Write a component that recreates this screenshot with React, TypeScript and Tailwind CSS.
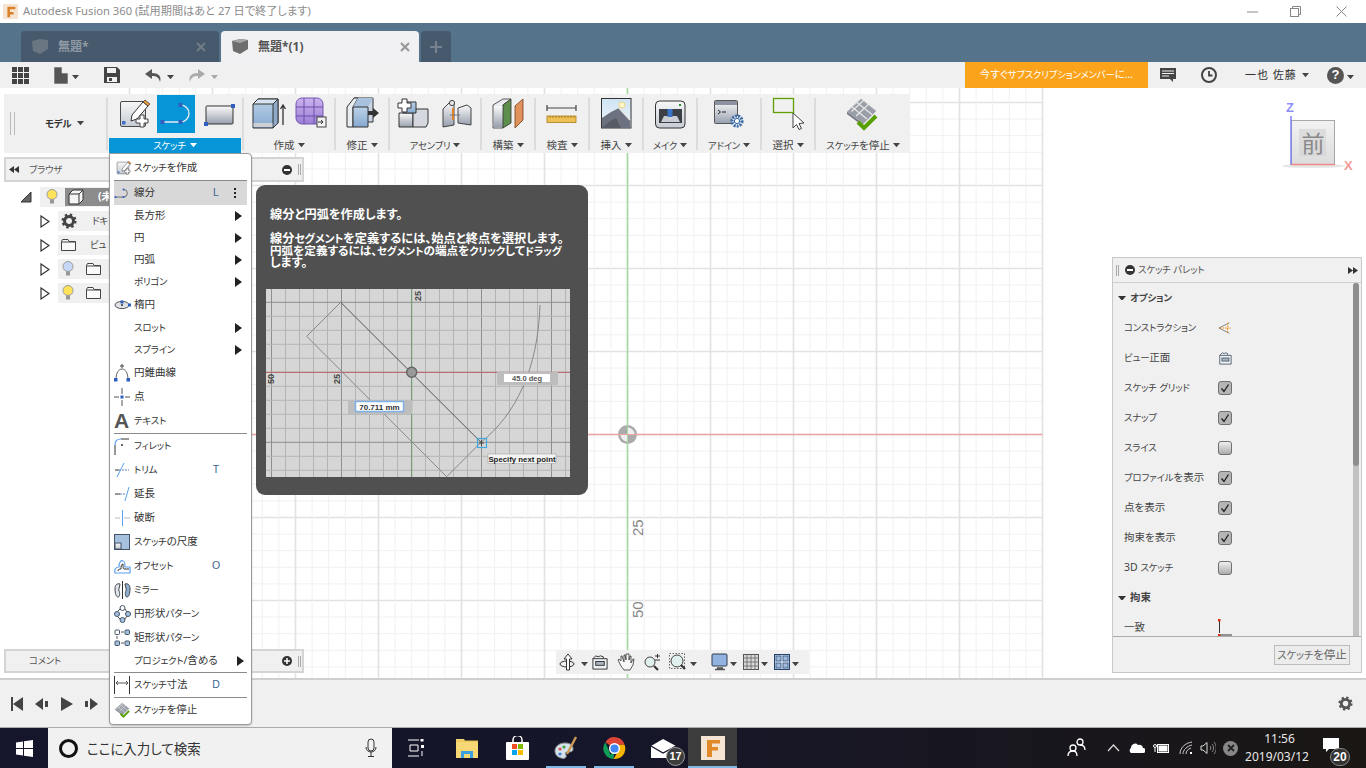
import React from "react";

const JP = "font-['Noto_Sans','Noto_Sans_CJK_JP',sans-serif] [font-feature-settings:'palt']";

/* Katakana runs are set slightly narrower, as in the reference's UI font */
const J = ({ children }: { children: string }) => (
  <>
    {children.split(/([ァ-ヶー]+)/).map((p, i) =>
      i % 2 ? <span key={i} className="text-[.9em] tracking-[-.02em]">{p}</span> : <React.Fragment key={i}>{p}</React.Fragment>
    )}
  </>
);

type P = { s?: number };
const S = ({ s = 38, children }: { s?: number; children: React.ReactNode }) => (
  <svg width={s} height={s} viewBox="0 0 38 38" className="shrink-0">{children}</svg>
);
const Caret = ({ c = "#444", w = 7 }: { c?: string; w?: number }) => (
  <svg width={w} height={w * 0.6} viewBox="0 0 10 6" className="inline-block shrink-0"><path d="M0 0h10L5 6z" fill={c} /></svg>
);
const Defs = () => (
  <svg width="0" height="0" className="absolute">
    <defs>
      <linearGradient id="gb" x1="0" y1="0" x2="0" y2="1"><stop offset="0" stopColor="#bcd2e8" /><stop offset="1" stopColor="#86a9d0" /></linearGradient>
      <linearGradient id="gg" x1="0" y1="0" x2="0" y2="1"><stop offset="0" stopColor="#fbfbfb" /><stop offset="1" stopColor="#98a0ae" /></linearGradient>
      <linearGradient id="gl" x1="0" y1="0" x2="0" y2="1"><stop offset="0" stopColor="#f6f7f8" /><stop offset="1" stopColor="#c6ccd4" /></linearGradient>
      <linearGradient id="gp" x1="0" y1="0" x2="0" y2="1"><stop offset="0" stopColor="#cbb2ee" /><stop offset="1" stopColor="#9c7fd6" /></linearGradient>
      <linearGradient id="gs" x1="0" y1="0" x2="0" y2="1"><stop offset="0" stopColor="#cfe4f4" /><stop offset="1" stopColor="#eef3f5" /></linearGradient>
      <linearGradient id="gc" x1="0" y1="0" x2="0" y2="1"><stop offset="0" stopColor="#f2f2f2" /><stop offset="1" stopColor="#a9a9a9" /></linearGradient>
    </defs>
  </svg>
);

const PencilSketch = ({ s }: P) => (
  <S s={s}>
    <rect x="6.500" y="6.500" width="25" height="25" rx="1.500" fill="url(#gl)" stroke="#4a4a4a" />
    <rect x="8" y="26" width="3.500" height="3.500" fill="#3f6fc8" />
    <path d="M18 20l11-13 5 4-11 13-6 2z" fill="#fff" stroke="#333" />
    <path d="M29 7l2-2 5 4-2 2z" fill="#e59a3a" stroke="#333" strokeWidth=".7" />
    <path d="M26 20h4v4h4v4h-4v4h-4v-4h-4v-4h4z" fill="#fff" stroke="#444" />
  </S>
);
const LineIcon = ({ s, stroke = "#dfe9f2" }: P & { stroke?: string }) => (
  <S s={s}>
    <path d="M6 27h17.500a8.500 8.500 0 0 0 0-17" fill="none" stroke={stroke} strokeWidth="1.400" />
    <rect x="3.500" y="25" width="4" height="4" fill="#2f5fbf" />
    <rect x="21.500" y="25" width="4" height="4" fill="#2f5fbf" />
    <rect x="21.500" y="8" width="4" height="4" fill="#2f5fbf" />
  </S>
);
const RectIcon = () => (
  <S>
    <rect x="6" y="11" width="27" height="18" rx="1" fill="url(#gg)" stroke="#333" />
    <rect x="31" y="9" width="4" height="4" fill="#2f5fbf" />
    <rect x="4" y="27" width="4" height="4" fill="#2f5fbf" />
  </S>
);
const Extrude = () => (
  <S>
    <path d="M3 9l5-5h20v24l-5 5H3z" fill="url(#gb)" stroke="#333" />
    <path d="M3 9l5-5h20l-5 5z" fill="#d6e3f0" stroke="#333" />
    <path d="M23 9l5-5v24l-5 5z" fill="#8fa9c8" stroke="#333" />
    <rect x="3.500" y="28" width="19" height="4" fill="#ccd0d5" />
    <path d="M33 30V11M30.500 14l2.500-4 2.500 4" fill="none" stroke="#333" strokeWidth="1.300" />
  </S>
);
const Purple = () => (
  <S>
    <rect x="6" y="3" width="27" height="26" rx="6" fill="url(#gp)" stroke="#7557b0" />
    <path d="M6 12h27M6 21h27M14 3v26M24 3v26" stroke="#6d50aa" strokeWidth="1" fill="none" />
    <rect x="27" y="22" width="9" height="10" fill="#f2f2f2" stroke="#444" />
    <path d="M28 27h5M31 25l2 2-2 2" stroke="#333" fill="none" />
  </S>
);
const Modify = () => (
  <S>
    <path d="M11 3h19v24H11z" fill="#c9d5e3" stroke="#333" />
    <path d="M4 12l7-9h4l-5 9v20H4z" fill="#e9edf1" stroke="#333" />
    <path d="M10 12l5-9h15l-5 9z" fill="#a8c1dc" />
    <path d="M10 12h15v20H10z" fill="url(#gb)" stroke="#333" />
    <path d="M25 16h5v-3l6 5-6 5v-3h-5z" fill="#333" />
  </S>
);
const Assembly = () => (
  <S>
    <path d="M4 18h14v14H4z" fill="url(#gg)" stroke="#333" />
    <path d="M18 18l3-4h12v14l-2 4H18z" fill="#d5d9df" stroke="#333" />
    <path d="M8 7h13v11H8z" fill="url(#gb)" stroke="#333" />
    <path d="M7 4h5v4h4v5h-4v4H7v-4H3V8h4z" fill="#fff" stroke="#333" />
  </S>
);
const Joint = () => (
  <S>
    <path d="M5 14l8-8 3 2v22l-11 2z" fill="url(#gg)" stroke="#444" />
    <circle cx="14" cy="8" r="2.600" fill="#e8e8e8" stroke="#444" />
    <path d="M15 13v12" stroke="#e5832a" strokeWidth="2" />
    <path d="M20 13l9-3 4 3v17l-13-2z" fill="url(#gg)" stroke="#444" />
    <path d="M12 20h10" stroke="#777" />
  </S>
);
const Construct = () => (
  <S>
    <path d="M4 10l10-6h8L14 10v23H4z" fill="#e9ebee" stroke="#333" strokeWidth=".8" />
    <rect x="5" y="11" width="9" height="21" fill="url(#gg)" />
    <path d="M14 10l8-6v24l-8 5z" fill="#5d8e4d" stroke="#333" strokeWidth=".8" />
    <path d="M26 11l8-7v21l-8 8z" fill="#e0915c" stroke="#7a3d17" strokeWidth=".8" />
  </S>
);
const Inspect = () => (
  <S>
    <path d="M4 13h29M4 10v6M33 10v6" stroke="#444" strokeWidth="1.200" fill="none" />
    <rect x="4" y="21" width="29" height="6.500" fill="#edc153" stroke="#a77d1f" strokeWidth=".8" />
    <path d="M7 21v2M10 21v2M13 21v2M16 21v2M19 21v2M22 21v2M25 21v2M28 21v2M31 21v2" stroke="#8a6a1a" strokeWidth=".7" />
  </S>
);
const Picture = () => (
  <S>
    <rect x="4.500" y="3.500" width="29.500" height="29.500" fill="url(#gs)" stroke="#333" />
    <circle cx="25" cy="10" r="3" fill="#fff6cf" stroke="#f0d67a" />
    <path d="M5 33V23l9-6 8-4 11 12v8z" fill="#6d7280" />
    <path d="M22 13l11 12" stroke="#e6e6e6" strokeWidth="1.500" />
    <path d="M5 33l8-7 6-3 5 10z" fill="#575b66" />
  </S>
);
const Make = () => (
  <S>
    <rect x="4.500" y="6" width="29.500" height="27" rx="4" fill="url(#gl)" stroke="#333" />
    <rect x="8" y="14" width="23" height="14" fill="#3c3f46" />
    <path d="M10 27l3-6h13l3 6z" fill="#c9ccd2" />
    <rect x="16.500" y="14" width="5" height="8" fill="#3a72c4" />
    <path d="M19 22v3" stroke="#d7d7d7" strokeWidth="1.500" />
    <rect x="28" y="9" width="2" height="2" fill="#2d8f2d" />
  </S>
);
const AddIn = () => (
  <S>
    <rect x="4.500" y="5.500" width="23" height="23" rx="1" fill="url(#gg)" stroke="#555" />
    <rect x="5" y="6" width="22" height="4" fill="#8c92a0" />
    <path d="M8 15l2.500 2-2.500 2M12 17h4" fill="none" stroke="#222" />
    <circle cx="27" cy="26" r="5" fill="#fff" stroke="#3d6ca8" strokeWidth="3.200" strokeDasharray="2 1" />
    <circle cx="27" cy="26" r="2.600" fill="#fff" stroke="#2f5f9c" />
  </S>
);
const Select = () => (
  <S>
    <rect x="4.500" y="3.500" width="20" height="14" fill="none" stroke="#5ea100" strokeWidth="1.300" />
    <path d="M24 18v15l3.500-3.500 2.500 5 2.500-1-2.500-5 5-.5z" fill="#fff" stroke="#444" />
  </S>
);
const StopSketch = ({ s }: P) => (
  <S s={s}>
    <path d="M3 17L17 4l15 12-13 13z" fill="#9a9ea8" stroke="#b6b9c0" />
    <path d="M8 12l15 12M13 7.500l15 12M12 21l14-13M7.500 16.500L20 5" stroke="#e8e8e8" strokeWidth="1.200" />
    <path d="M3 17v2l16 12v-2z" fill="#70747e" />
    <path d="M14 27l6 6 12-12" fill="none" stroke="#58a000" strokeWidth="4" />
  </S>
);

const Sep = () => <div className="w-[2px] h-[52px] self-center bg-[#dcdcdc] shrink-0" />;
function Group({ w, label, gap = 0, children }: { w: string; label: string; gap?: number; children: React.ReactNode }) {
  return (
    <div className={`${w} shrink-0 flex flex-col`}>
      <div className="h-[44px] flex items-start justify-center pt-[1px]" style={{ gap }}>{children}</div>
      <div className="h-[15px] flex items-center justify-center gap-[3px] text-[10.500px] text-[#444] whitespace-nowrap"><span><J>{label}</J></span><Caret /></div>
    </div>
  );
}

function Ribbon() {
  return (
    <div className="ml-[4px] w-[906px] h-[59px] bg-[#f0f0f0] flex shrink-0">
      <div className="w-[102px] shrink-0 flex items-center pl-[6px]">
        <div className="w-[5px] h-[23px] border-x border-[#bbb]" />
        <div className="ml-[30px] flex items-center gap-[6px] text-[10.500px] font-bold text-[#333]"><span><J>モデル</J></span><Caret /></div>
      </div>
      <Sep />
      <div className="w-[134px] shrink-0 flex flex-col">
        <div className="h-[44px] flex items-start gap-[5px] pt-[1px] pl-[6px]">
          <PencilSketch />
          <div className="w-[38px] h-[38px] bg-[#0696d7]"><LineIcon /></div>
          <RectIcon />
        </div>
        <div className="ml-[1px] w-[132px] h-[15px] bg-[#0696d7] text-white flex items-center justify-center gap-[4px] text-[10.500px]"><span><J>スケッチ</J></span><Caret c="#fff" /></div>
      </div>
      <Sep />
      <Group w="w-[90px]" label="作成" gap={2}><Extrude /><Purple /></Group><Sep />
      <Group w="w-[52px]" label="修正"><Modify /></Group><Sep />
      <Group w="w-[90px]" label="アセンブリ" gap={5}><Assembly /><Joint /></Group><Sep />
      <Group w="w-[52px]" label="構築"><Construct /></Group><Sep />
      <Group w="w-[52px]" label="検査"><Inspect /></Group><Sep />
      <Group w="w-[52px]" label="挿入"><Picture /></Group><Sep />
      <Group w="w-[52px]" label="メイク"><Make /></Group><Sep />
      <Group w="w-[62px]" label="アドイン"><AddIn /></Group><Sep />
      <Group w="w-[52px]" label="選択"><Select /></Group><Sep />
      <Group w="w-[94px]" label="スケッチを停止"><StopSketch /></Group>
    </div>
  );
}

const M = ({ children }: { children: React.ReactNode }) => (
  <svg width="17" height="20" viewBox="0 0 17 20" className="shrink-0">{children}</svg>
);
const Ellipse = () => <M><ellipse cx="8" cy="10" rx="7" ry="3.600" fill="#dfe3e8" stroke="#555" /><rect x="6.500" y="5.500" width="3" height="3" fill="#2f5fbf" /><rect x="14" y="8.500" width="3" height="3" fill="#2f5fbf" /><path d="M7 10h2M8 9v2" stroke="#333" /></M>;
const Conic = () => <M><path d="M2 17c0-8 3-11 6-11s6 3 6 11" fill="none" stroke="#666" /><path d="M8 1v4M6 3h4" stroke="#444" /><rect x="0" y="15" width="3.500" height="3.500" fill="#2f5fbf" /><rect x="12.500" y="15" width="3.500" height="3.500" fill="#2f5fbf" /></M>;
const Pt = () => <M><path d="M8 1v6M8 13v6M0 10h5M11 10h5" stroke="#555" /><rect x="6.500" y="8.500" width="3" height="3" fill="#2f5fbf" /></M>;
const Fillet = () => <M><path d="M1 19V9" stroke="#333" /><path d="M1 9c0-4 2-6 6-6" fill="none" stroke="#5ba0ee" strokeWidth="1.200" /><path d="M7 3h8" stroke="#333" /><path d="M7 9h2M8 8v2" stroke="#333" /></M>;
const Trim = () => <M><path d="M1 10h4" stroke="#333" /><path d="M5 10h10" stroke="#5b7fb8" strokeDasharray="2 1" /><path d="M3 17l7-14" stroke="#5ba0ee" /></M>;
const Extend = () => <M><path d="M1 10h5" stroke="#333" /><path d="M6 10h6" stroke="#5b7fb8" strokeDasharray="2 1" /><path d="M11 17l4-14" stroke="#5ba0ee" /></M>;
const Break = () => <M><path d="M1 10h5M10 10h6" stroke="#bbb" /><path d="M8.500 2v16" stroke="#5ba0ee" /></M>;
const Scale = () => <M><rect x=".5" y="2.500" width="15" height="15" fill="#a5c1de" stroke="#44556a" /><rect x="1" y="11" width="6" height="6" fill="url(#gl)" stroke="#44556a" /></M>;
const Offset = () => <M><path d="M1 17c-1-4 1-6 4-6 0-5 2-7 4-6 2 0 2 3 2 6h5v6z" fill="none" stroke="#5ba0ee" strokeWidth="1.200" /><path d="M4 15c0-2 2-2 3-2 0-2 0-5 2-5 0 2 0 5 1 5h5" fill="none" stroke="#333" /></M>;
const Mirror = () => <M><path d="M8.500 1v18" stroke="#333" /><path d="M6 4C3 3 1 5 1 9c0 4 1 8 3 8s2-5 1-6 1-5 1-7z" fill="#dfe5ec" stroke="#444" /><path d="M11 4c3-1 5 1 5 5 0 4-1 8-3 8s-2-5-1-6-1-5-1-7z" fill="#8eb0d2" stroke="#444" /></M>;
const Cir = () => <M><g fill="#a5c1de" stroke="#44556a"><circle cx="3" cy="10" r="2.500" /><circle cx="14" cy="10" r="2.500" /><circle cx="8.500" cy="16" r="2.500" /><circle cx="8.500" cy="4" r="2.500" fill="#fff" /></g><path d="M4 7l2-2M11 5l2 3M4 13l2 2M11 15l2-3" stroke="#555" /></M>;
const RectP = () => <M><g stroke="#44556a"><rect x="1" y="2" width="4.500" height="4.500" rx="1" fill="#fff" /><rect x="11" y="2" width="4.500" height="4.500" rx="1" fill="#a5c1de" /><rect x="1" y="13" width="4.500" height="4.500" rx="1" fill="#a5c1de" /><rect x="11" y="13" width="4.500" height="4.500" rx="1" fill="#a5c1de" /></g><path d="M7 4h3M7 15h3M3 8v3" stroke="#555" /></M>;
const Dim = () => <M><path d="M.5 1v18M15.500 1v18" stroke="#333" /><path d="M2 8h12M4 6L2 8l2 2M12 6l2 2-2 2" fill="none" stroke="#555" /></M>;

type Row = { l: string; h: string; i?: React.ReactNode; k?: string; a?: boolean; sel?: boolean };
const Arrow = () => <svg width="7" height="10" viewBox="0 0 7 10" className="shrink-0 ml-[6px]"><path d="M0 0l7 5-7 5z" fill="#222" /></svg>;
const Divider = () => <div className="mx-[4px] h-[1px] bg-[#8a8a8a]" />;
const Item = ({ l, h, i, k, a, sel }: Row) => (
  <div className={`${h} mx-[4px] flex items-center ${sel ? "bg-[#d8d8d8]" : ""}`}>
    <div className="w-[20px] shrink-0 flex justify-start">{i}</div>
    <div className="flex-1 text-[10.500px] text-[#333] whitespace-nowrap"><J>{l}</J></div>
    <div className="w-[14px] text-center text-[10.500px] text-[#3c6590] font-['Liberation_Sans',sans-serif]">{k}</div>
    <div className="w-[24px] flex justify-center">
      {a && <Arrow />}
      {sel && <span className="flex flex-col gap-[2px]"><i className="w-[2px] h-[2px] bg-[#222]" /><i className="w-[2px] h-[2px] bg-[#222]" /><i className="w-[2px] h-[2px] bg-[#222]" /></span>}
    </div>
  </div>
);

function Menu() {
  return (
    <div className="absolute left-[109px] top-[65px] w-[143px] h-[572px] bg-white border border-[#9a9a9a] rounded-b-[4px] rounded-tr-[4px] z-20 shadow-[0_1px_2px_rgba(0,0,0,.2)]">
      <Item h="h-[26px] pt-[2px]" l="スケッチを作成" i={<PencilSketch s={18} />} />
      <Divider />
      <Item h="h-[24px]" l="線分" k="L" sel i={<span className="-ml-[1px]"><LineIcon s={17} stroke="#333" /></span>} />
      <Item h="h-[22px]" l="長方形" a />
      <Item h="h-[22px]" l="円" a />
      <Item h="h-[22px]" l="円弧" a />
      <Item h="h-[22px]" l="ポリゴン" a />
      <Item h="h-[24px]" l="楕円" i={<Ellipse />} />
      <Item h="h-[22px]" l="スロット" a />
      <Item h="h-[22px]" l="スプライン" a />
      <Item h="h-[24px]" l="円錐曲線" i={<Conic />} />
      <Item h="h-[24px]" l="点" i={<Pt />} />
      <Item h="h-[24px]" l="テキスト" i={<span className="font-['Liberation_Sans',sans-serif] font-bold text-[21px] leading-[20px] text-[#555]">A</span>} />
      <Divider />
      <Item h="h-[24px]" l="フィレット" i={<Fillet />} />
      <Item h="h-[24px]" l="トリム" k="T" i={<Trim />} />
      <Item h="h-[24px]" l="延長" i={<Extend />} />
      <Item h="h-[24px]" l="破断" i={<Break />} />
      <Item h="h-[24px]" l="スケッチの尺度" i={<Scale />} />
      <Item h="h-[24px]" l="オフセット" k="O" i={<Offset />} />
      <Item h="h-[24px]" l="ミラー" i={<Mirror />} />
      <Item h="h-[24px]" l="円形状パターン" i={<Cir />} />
      <Item h="h-[24px]" l="矩形状パターン" i={<RectP />} />
      <Item h="h-[22px]" l="プロジェクト/含める" a />
      <Divider />
      <Item h="h-[24px]" l="スケッチ寸法" k="D" i={<Dim />} />
      <Divider />
      <Item h="h-[24px]" l="スケッチを停止" i={<StopSketch s={18} />} />
    </div>
  );
}

function TipImage() {
  const v = Array.from({ length: 22 }, (_, i) => 5.5 + i * 14);
  const h = Array.from({ length: 14 }, (_, i) => 13.3 + i * 14);
  return (
    <svg width="304" height="188" viewBox="0 0 304 188" className="block">
      <rect width="304" height="188" fill="#d6d6d6" />
      {v.map((x, i) => <line key={i} x1={x} x2={x} y1="0" y2="188" stroke={i % 5 === 0 ? "#8e8e8e" : "#b4b4b4"} />)}
      {h.map((y, i) => <line key={i} x1="0" x2="304" y1={y} y2={y} stroke={i % 10 === 0 ? "#8e8e8e" : "#b4b4b4"} />)}
      <line x1="145.700" x2="145.700" y1="0" y2="188" stroke="#6f9f6f" />
      <line x1="0" x2="304" y1="83.300" y2="83.300" stroke="#b55f5f" />
      <path d="M74.700 13.300L215 153.300" stroke="#555" fill="none" />
      <path d="M74.700 13.300L40.700 47.300L180.700 187.700L215 153.300" stroke="#888" fill="none" />
      <path d="M215 153.300C250 125 272 80 274 16" stroke="#888" fill="none" />
      <circle cx="145.700" cy="83.300" r="5" fill="#999" stroke="#666" strokeWidth="1.500" />
      <g fontFamily="Liberation Sans" fill="#444" fontSize="9">
        <text transform="translate(155 12) rotate(-90)">25</text>
        <text transform="translate(74 95) rotate(-90)">25</text>
        <text transform="translate(8 95) rotate(-90)">50</text>
      </g>
      <rect x="82" y="111" width="64" height="14" fill="#bdbdbd" />
      <rect x="89.500" y="112.500" width="48" height="10" fill="#fff" stroke="#7fb0e6" strokeWidth="1.500" />
      <text x="113.500" y="121" textAnchor="middle" fontFamily="Liberation Sans" fontSize="8" fontWeight="700" fill="#333">70.711 mm</text>
      <rect x="231" y="83" width="61" height="13" fill="#bdbdbd" />
      <rect x="238" y="85" width="46" height="8" fill="#fff" />
      <text x="261" y="92" textAnchor="middle" fontFamily="Liberation Sans" fontSize="7.500" fontWeight="700" fill="#555">45.0 deg</text>
      <rect x="222" y="165" width="68" height="9.500" fill="#f3f3f3" stroke="#999" strokeWidth=".5" />
      <text x="256" y="172.500" textAnchor="middle" fontFamily="Liberation Sans" fontSize="7.800" fontWeight="700" fill="#222">Specify next point</text>
      <rect x="211.500" y="149.500" width="9" height="9" fill="none" stroke="#3fa8e0" strokeWidth="1.200" />
      <path d="M213 154h5M215.500 151v6" stroke="#444" />
    </svg>
  );
}

function Tooltip() {
  return (
    <div className="absolute left-[256px] top-[97px] w-[332px] h-[310px] bg-[#505050] rounded-[9px] z-20 pt-[23px] pl-[10px] text-white font-bold text-[12.200px]">
      <div className="pl-[4px] h-[13px] leading-[13px]">線分と円弧を作成します。</div>
      <div className="pl-[4px] mt-[12px] w-[312px] h-[36px] leading-[12px] whitespace-nowrap">
        <div className="h-[12px]"><J>線分セグメントを定義するには、始点と終点を選択します。</J></div>
        <div className="h-[12px] text-[11.600px]"><J>円弧を定義するには、セグメントの端点をクリックしてドラッグ</J></div>
        <div className="h-[12px]">します。</div>
      </div>
      <div className="mt-[20px]"><TipImage /></div>
    </div>
  );
}

function GridCanvas() {
  const step = 16.6;
  const xs = Array.from({ length: 56 }, (_, i) => i - 30);
  const ys = Array.from({ length: 42 }, (_, i) => i - 21);
  const ox = 627.5, oy = 346.5;
  return (
    <svg className="absolute left-0 top-0" width="1366" height="590" viewBox="0 0 1366 590">
      {ys.map(k => { const y = oy + k * step; return y < 0 ? null : <line key={k} x1={ox - 30 * step} x2={ox + 25 * step} y1={y} y2={y} stroke={k % 5 === 0 ? "#e2e2e2" : "#f1f1f1"} strokeWidth={k % 5 === 0 ? 1.6 : 1} />; })}
      {xs.map(k => { const x = ox + k * step; return <line key={k} x1={x} x2={x} y1="0" y2="590" stroke={k % 5 === 0 ? "#e2e2e2" : "#f1f1f1"} strokeWidth={k % 5 === 0 ? 1.6 : 1} />; })}
      <line x1={ox - 30 * step} x2={ox + 25 * step} y1={oy} y2={oy} stroke="#f0a3a3" strokeWidth="1.500" />
      <line x1={ox} x2={ox} y1="0" y2="590" stroke="#a5dba0" strokeWidth="1.500" />
      <circle cx={ox} cy={oy} r="9.500" fill="#ababab" />
      <path d={`M${ox} ${oy}V${oy - 7}A7 7 0 0 1 ${ox + 7} ${oy}zM${ox} ${oy}V${oy + 7}A7 7 0 0 1 ${ox - 7} ${oy}z`} fill="#efefef" />
      <line x1={ox} x2={ox} y1={oy - 9.5} y2={oy + 9.5} stroke="#a5dba0" />
      <line x1={ox - 9.5} x2={ox + 9.5} y1={oy} y2={oy} stroke="#f0a3a3" />
      <g fontFamily="Liberation Sans" fontSize="15" fill="#888">
        <text transform="translate(643 448) rotate(-90)">25</text>
        <text transform="translate(643 530) rotate(-90)">50</text>
      </g>
    </svg>
  );
}

const Minus = () => <span className="w-[10px] h-[10px] rounded-full bg-[#333] flex items-center justify-center shrink-0"><i className="w-[6px] h-[2px] bg-white" /></span>;
const Plus = () => <svg width="10" height="10" viewBox="0 0 10 10" className="shrink-0"><circle cx="5" cy="5" r="5" fill="#333" /><path d="M2 5h6M5 2v6" stroke="#fff" strokeWidth="1.500" /></svg>;
const Grip = () => <div className="w-[3px] h-[11px] border-x border-[#aaa] shrink-0" />;
const Rewind = ({ flip }: { flip?: boolean }) => <svg width="10" height="7" viewBox="0 0 10 7" className={flip ? "rotate-180 shrink-0" : "shrink-0"}><path d="M5 0L0 3.500 5 7zM10 0L5 3.500 10 7z" fill="#333" /></svg>;
const Tri = ({ open }: { open?: boolean }) => open
  ? <svg width="12" height="12" viewBox="0 0 12 12" className="shrink-0"><path d="M1 11L11 1v10z" fill="#666" stroke="#333" /></svg>
  : <svg width="10" height="13" viewBox="0 0 10 13" className="shrink-0"><path d="M1 1l8 5.500L1 12z" fill="#fff" stroke="#333" strokeWidth="1.200" /></svg>;
const Bulb = ({ c = "#ffe35a" }: { c?: string }) => (
  <svg width="12" height="16" viewBox="0 0 12 16" className="shrink-0"><circle cx="6" cy="5.500" r="5" fill={c} stroke="#999" /><rect x="4" y="10.500" width="4" height="4" fill="#999" /></svg>
);
const Folder = () => <svg width="15" height="12" viewBox="0 0 15 12" className="shrink-0"><path d="M.5 2.500V11.500h14V2.500H8L7 .500H1.500z" fill="#fafafa" stroke="#444" /><path d="M.5 3h14" stroke="#444" /></svg>;
const Gear = ({ s = 16, c = "#444" }: { s?: number; c?: string }) => (
  <svg width={s} height={s} viewBox="0 0 16 16" className="shrink-0"><circle cx="8" cy="8" r="4.500" fill="none" stroke={c} strokeWidth="3" /><circle cx="8" cy="8" r="6.300" fill="none" stroke={c} strokeWidth="2.500" strokeDasharray="2.400 2.550" /></svg>
);

function Browser() {
  return (
    <div className="w-[300px] flex-1 flex flex-col justify-between">
      <div className="h-[25px] bg-[#f0f0f0] border-2 border-[#d4d4d4] flex items-center pl-[3px] pr-[1px] text-[10.500px] text-[#555]">
        <Rewind /><span className="flex-1 ml-[10px]"><J>ブラウザ</J></span><Minus /><span className="ml-[6px]"><Grip /></span>
      </div>
      <div className="h-[24px] bg-[#f0f0f0] border-2 border-[#d4d4d4] flex items-center pl-[3px] pr-[1px] text-[10.500px] text-[#555]">
        <span className="flex-1 pl-[20px]"><J>コメント</J></span><Plus /><span className="ml-[6px]"><Grip /></span>
      </div>
    </div>
  );
}

function TreeRows() {
  const row = "h-[20px] flex items-center pl-[40px]";
  const box = "ml-[8px] h-[20px] flex-1 bg-[#f0f0f0] flex items-center text-[10.500px] text-[#444] whitespace-nowrap";
  return (
    <div className="absolute left-0 top-[99px] w-[109px] flex flex-col gap-[4px]">
      <div className="h-[20px] flex items-center pl-[20px]">
        <Tri open />
        <div className="ml-[8px] h-[20px] flex-1 bg-[#f0f0f0] flex items-center pl-[6px] gap-[7px]">
          <Bulb />
          <div className="flex-1 h-[18px] bg-[#8c8c8c] flex items-center pl-[3px] gap-[14px] text-white font-bold text-[10.500px] whitespace-nowrap">
            <svg width="16" height="16" viewBox="0 0 16 16" className="shrink-0"><path d="M1 5l4-4h10v10l-4 4H1z" fill="#f4f4f4" stroke="#333" /><path d="M1 5h10v10M11 5l4-4" fill="none" stroke="#333" /></svg>
            (未
          </div>
        </div>
      </div>
      <div className={row}><Tri /><div className={`${box} pl-[3px] gap-[15px]`}><Gear /><span><J>ドキ</J></span></div></div>
      <div className={row}><Tri /><div className={`${box} pl-[3px] gap-[14px]`}><Folder /><span><J>ビュ</J></span></div></div>
      <div className={row}><Tri /><div className={`${box} pl-[4px] gap-[12px]`}><Bulb c="#c6d8f5" /><Folder /></div></div>
      <div className={row}><Tri /><div className={`${box} pl-[4px] gap-[12px]`}><Bulb /><Folder /></div></div>
    </div>
  );
}

const Check = ({ on }: { on?: boolean }) => (
  <svg width="14" height="14" viewBox="0 0 14 14" className="shrink-0">
    <rect x=".5" y=".5" width="13" height="13" rx="2.500" fill={on ? "#b5b5b5" : "url(#gc)"} stroke="#707070" />
    {on && <path d="M3.500 7.500l2.500 3 4.500-7" fill="none" stroke="#1c1c1c" strokeWidth="1.300" />}
  </svg>
);

function Palette() {
  const rows: [string, React.ReactNode][] = [
    ["コンストラクション", <svg width="16" height="16" viewBox="0 0 16 16"><path d="M1 8l12-6M1 8l12 6" stroke="#777" /><path d="M2 8h13M11 2v12" stroke="#f08a00" strokeDasharray="2 1" /></svg>],
    ["ビュー正面", <svg width="16" height="16" viewBox="0 0 16 16"><path d="M2 5V15h13V5zM2 5l3-3 2 1 2-1 2 1v2" fill="#eef0f3" stroke="#4a5a6c" /><rect x="4.500" y="8" width="8" height="3.500" fill="#a9b4c0" stroke="#4a5a6c" /></svg>],
    ["スケッチ グリッド", <Check on />],
    ["スナップ", <Check on />],
    ["スライス", <Check />],
    ["プロファイルを表示", <Check on />],
    ["点を表示", <Check on />],
    ["拘束を表示", <Check on />],
    ["3D スケッチ", <Check />],
  ];
  return (
    <div className="w-[250px] h-[416px] mr-[4px] mt-[104px] bg-[#f0f0f0] border border-[#c8c8c8] flex flex-col text-[10.500px] text-[#444] shrink-0">
      <div className="h-[25px] border-b border-[#cfcfcf] flex items-center px-[3px] gap-[6px] text-[#555] shrink-0">
        <Grip /><Minus /><span className="flex-1 -ml-[3px]"><J>スケッチ パレット</J></span><Rewind flip />
      </div>
      <div className="flex flex-1 min-h-0">
        <div className="flex-1 overflow-hidden">
          <div className="h-[30px] flex items-center pl-[5px] gap-[4px] font-bold"><Caret w={8} c="#333" /><span><J>オプション</J></span></div>
          {rows.map(([l, c], i) => (
            <div key={i} className="h-[30px] flex items-center pl-[11px]">
              <span className="w-[94px] whitespace-nowrap"><J>{l}</J></span><span className="w-[14px] flex justify-center">{c}</span>
            </div>
          ))}
          <div className="h-[30px] flex items-center pl-[5px] gap-[4px] font-bold"><Caret w={8} c="#333" />拘束</div>
          <div className="h-[30px] flex items-center pl-[11px]">
            <span className="w-[94px]">一致</span>
            <svg width="14" height="18" viewBox="0 0 14 18"><path d="M1.500 2v12M1.500 16h13" stroke="#333" /><rect x="0" y="0" width="2.500" height="2.500" fill="#d83010" /><rect x="0" y="15" width="2.500" height="2.500" fill="#d83010" /></svg>
          </div>
        </div>
        <div className="w-[6px] mr-[2px] bg-[#c2c2c2] rounded-t-[3px]"><div className="h-[183px] bg-[#8e8e8e] rounded-[3px]" /></div>
      </div>
      <div className="h-[36px] border-t border-[#aaa] flex items-center justify-end pr-[11px] shrink-0">
        <div className="w-[76px] h-[20px] border border-[#bdbdbd] bg-[#ececec] flex items-center justify-center text-[11.500px] text-[#666] whitespace-nowrap"><span><J>スケッチを停止</J></span></div>
      </div>
    </div>
  );
}

function NavBar() {
  const c = <Caret c="#444" />;
  return (
    <div className="mb-[-1px] w-[253px] h-[24px] bg-[#f0f0f0] flex items-center pl-[3px] shrink-0">
      <svg width="18" height="18" viewBox="0 0 18 18"><ellipse cx="8" cy="11" rx="7" ry="3" fill="none" stroke="#333" /><path d="M9 1l4 5h-2.500v11h-3V6H5z" fill="#fff" stroke="#333" /></svg>
      <span className="ml-[4px]">{c}</span>
      <svg width="18" height="18" viewBox="0 0 38 38" className="ml-[3px]"><path d="M4 12V34h30V12zM4 12l6-6 5 2 5-2 6 2v4" fill="#eef0f3" stroke="#333" strokeWidth="2" /><rect x="10" y="18" width="18" height="8" fill="#a9b4c0" stroke="#333" strokeWidth="2" /></svg>
      <svg width="18" height="18" viewBox="0 0 18 18" className="ml-[8px]"><path d="M4 8L2 6 1 7l3 6 3 4h6l3-5 1-6h-1l-2 4V3h-1l-1 4V1H9v6L8 2H7v7L5 3H4z" fill="#f6f6f6" stroke="#333" strokeWidth=".8" /></svg>
      <svg width="18" height="18" viewBox="0 0 18 18" className="ml-[8px]"><circle cx="7" cy="9" r="5" fill="#dff0ee" stroke="#444" /><path d="M11 13l4 4" stroke="#333" strokeWidth="2.200" /><path d="M12 3h5M14.500 1v4M12 7h5" stroke="#333" /></svg>
      <svg width="18" height="18" viewBox="0 0 18 18" className="ml-[8px]"><rect x=".5" y=".5" width="15" height="15" fill="none" stroke="#666" strokeDasharray="1.500 1.500" /><circle cx="8" cy="8" r="6" fill="#dff0ee" stroke="#444" /><path d="M12 12l4 4" stroke="#333" strokeWidth="2.200" /></svg>
      <span className="ml-[3px]">{c}</span>
      <svg width="18" height="18" viewBox="0 0 18 18" className="ml-[14px]"><rect x="1" y="1" width="15" height="12" rx="1" fill="#92b2e0" stroke="#2e3d50" /><path d="M6 15h6M4 16.500h10" stroke="#555" strokeWidth="1.300" /></svg>
      <span className="ml-[1px]">{c}</span>
      <svg width="16" height="16" viewBox="0 0 16 16" className="ml-[6px]"><rect x=".5" y=".5" width="15" height="15" fill="#d8d8d8" stroke="#555" /><path d="M4 0v16M8 0v16M12 0v16M0 4h16M0 8h16M0 12h16" stroke="#666" strokeWidth=".8" /></svg>
      <span className="ml-[2px]">{c}</span>
      <svg width="16" height="16" viewBox="0 0 16 16" className="ml-[6px]"><rect x=".5" y=".5" width="15" height="15" fill="#dfe8f3" stroke="#24446e" strokeWidth="1.200" /><rect x="2" y="2" width="5" height="5" fill="#9db9dc" stroke="#24446e" strokeWidth=".7" /><rect x="9" y="2" width="5" height="5" fill="#9db9dc" stroke="#24446e" strokeWidth=".7" /><rect x="2" y="9" width="5" height="5" fill="#9db9dc" stroke="#24446e" strokeWidth=".7" /><rect x="9" y="9" width="5" height="5" fill="#9db9dc" stroke="#24446e" strokeWidth=".7" /></svg>
      <span className="ml-[2px]">{c}</span>
    </div>
  );
}

function ViewCube() {
  return (
    <div className="absolute left-[1283px] top-[12px] w-[72px] h-[72px]">
      <svg width="72" height="72" viewBox="0 0 72 72" className="absolute left-0 top-0">
        <defs><linearGradient id="vc" x1="0" y1="0" x2="0" y2="1"><stop offset="0" stopColor="#f2f2f2" /><stop offset="1" stopColor="#dcdcdc" /></linearGradient></defs>
        <ellipse cx="30" cy="66" rx="32" ry="2" fill="#e6e6e6" />
        <rect x="8.500" y="20.500" width="43" height="44" fill="url(#vc)" stroke="#a8a8a8" />
        <path d="M8 16v49" stroke="#7f7ff0" strokeWidth="1.500" />
        <path d="M8 64.500h44" stroke="#ee8a8a" strokeWidth="1.500" />
        <rect x="16" y="29" width="27" height="27" fill="#d2d2d2" opacity=".6" />
      </svg>
      <span className="absolute left-[15px] top-[29px] w-[30px] text-center text-[23px] leading-[26px] text-[#8a8a8a] font-['Noto_Sans_CJK_JP',sans-serif]">前</span>
      <span className="absolute left-[3px] top-[1px] text-[13px] leading-[14px] font-bold text-[#8f8ff8] font-['Liberation_Sans',sans-serif]">Z</span>
      <span className="absolute left-[61px] top-[59px] text-[13px] leading-[14px] font-bold text-[#f39a9a] font-['Liberation_Sans',sans-serif]">X</span>
    </div>
  );
}

function TopBar() {
  return (
    <div className="h-[26px] bg-[#f0f0f0] flex items-center shrink-0">
      <svg width="17" height="17" viewBox="0 0 17 17" className="ml-[12px]"><path d="M0 0h5v5H0zM6 0h5v5H6zM12 0h5v5h-5zM0 6h5v5H0zM6 6h5v5H6zM12 6h5v5h-5zM0 12h5v5H0zM6 12h5v5H6zM12 12h5v5h-5z" fill="#444" /></svg>
      <svg width="14" height="17" viewBox="0 0 14 17" className="ml-[25px]"><path d="M0 0h8l6 6v11H0zM8 0v6h6" fill="#555" stroke="#f0f0f0" strokeWidth=".6" /></svg>
      <span className="ml-[4px]"><Caret /></span>
      <svg width="16" height="16" viewBox="0 0 16 16" className="ml-[25px]"><path d="M0 0h13l3 3v13H0z" fill="#444" /><rect x="3" y="1" width="9" height="5" fill="#f0f0f0" /><rect x="3" y="10" width="10" height="5" fill="#f0f0f0" /><rect x="5" y="11" width="3" height="3" fill="#444" /></svg>
      <svg width="17" height="13" viewBox="0 0 17 13" className="ml-[25px]"><path d="M7 0L0 5l7 5V7c4 0 7 1 8 6 2-6-2-9-8-9z" fill="#555" /></svg>
      <span className="ml-[5px]"><Caret /></span>
      <svg width="17" height="13" viewBox="0 0 17 13" className="ml-[14px]"><path d="M10 0l7 5-7 5V7c-4 0-7 1-8 6-2-6 2-9 8-9z" fill="#aaa" /></svg>
      <span className="ml-[6px]"><Caret c="#aaa" /></span>
      <div className="flex-1" />
      <div className="w-[183px] h-[26px] bg-[#fba31b] text-white text-[10.500px] flex items-center justify-center whitespace-nowrap"><span><J>今すぐサブスクリプションメンバーに...</J></span></div>
      <svg width="16" height="16" viewBox="0 0 16 16" className="ml-[12px]"><path d="M0 1h16v11h-3v3l-3-3H0z" fill="#444" /><path d="M2 4h12M2 6.500h12M2 9h7" stroke="#f0f0f0" /></svg>
      <svg width="16" height="16" viewBox="0 0 16 16" className="ml-[25px]"><circle cx="8" cy="8" r="7" fill="#f0f0f0" stroke="#444" strokeWidth="2" /><path d="M8 4v4.500h3.500" fill="none" stroke="#444" strokeWidth="1.800" /></svg>
      <div className="ml-[28px] w-[59px] flex items-center gap-[5px] text-[#333] text-[11px]">
        <span className="whitespace-nowrap tracking-[1px]">一也 佐藤</span><Caret />
      </div>
      <div className="ml-[23px] w-[17px] h-[17px] rounded-full bg-[#555] text-white text-[13px] font-bold flex items-center justify-center font-['Liberation_Sans',sans-serif]">?</div>
      <span className="ml-[3px] mr-[12px]"><Caret /></span>
    </div>
  );
}

function Tabs() {
  return (
    <div className="h-[39px] bg-[#56738c] flex items-end pl-[21px] gap-[2px] shrink-0">
      <div className="w-[198px] h-[31px] bg-[#47596c] rounded-t-[4px] flex items-center pl-[10px] pr-[13px] gap-[10px] text-[12px] text-[#8f9aa5]">
        <svg width="17" height="15" viewBox="0 0 17 15"><path d="M1 2l8-2 8 1v9l-8 5-7-3z" fill="#6a7783" /></svg>
        <span className="flex-1 font-bold">無題*</span>
        <svg width="10" height="10" viewBox="0 0 10 10"><path d="M1 1l8 8M9 1L1 9" stroke="#6f7c88" strokeWidth="2.200" /></svg>
      </div>
      <div className="w-[198px] h-[31px] bg-[#f1f1f3] rounded-t-[4px] flex items-center pl-[10px] pr-[9px] gap-[10px] text-[12px] text-[#555]">
        <svg width="17" height="15" viewBox="0 0 17 15"><path d="M1 2l8-2 8 1v9l-8 5-7-3z" fill="#6e6e6e" /><path d="M1 2l8 2 8-3-8-1z" fill="#a5a5a5" /></svg>
        <span className="flex-1 font-bold">無題*(1)</span>
        <svg width="10" height="10" viewBox="0 0 10 10"><path d="M1 1l8 8M9 1L1 9" stroke="#999" strokeWidth="2.200" /></svg>
      </div>
      <div className="w-[30px] h-[31px] bg-[#47596c] rounded-t-[4px] flex items-center justify-center">
        <svg width="12" height="12" viewBox="0 0 12 12"><path d="M6 0v12M0 6h12" stroke="#76838f" strokeWidth="2.200" /></svg>
      </div>
    </div>
  );
}

function Timeline() {
  return (
    <div className="h-[49px] bg-[#f0f0f0] border-t-[2px] border-[#cfcfcf] flex items-center pl-[11px] pr-[13px] shrink-0">
      <svg width="12" height="14" viewBox="0 0 12 14"><path d="M0 0h2v14H0zM12 0v14L2 7z" fill="#444" /></svg>
      <svg width="13" height="12" viewBox="0 0 13 12" className="ml-[12px]"><path d="M8 0v12L0 6zM10 3h3v6h-3z" fill="#444" /></svg>
      <svg width="12" height="16" viewBox="0 0 12 16" className="ml-[13px]"><path d="M0 1l12 7-12 7z" fill="#444" /></svg>
      <svg width="13" height="12" viewBox="0 0 13 12" className="ml-[12px]"><path d="M5 0v12l8-6zM0 3h3v6H0z" fill="#444" /></svg>
      <div className="flex-1" />
      <Gear s={15} c="#555" />
    </div>
  );
}

const Under = ({ c }: { c: string }) => <i className={`absolute bottom-0 h-[2px] bg-[#7fb8e6] ${c}`} />;

function Taskbar() {
  return (
    <div className="h-[41px] border-t border-[#aaa] bg-[linear-gradient(90deg,#15152b,#16162a_45%,#1a1714)] flex items-stretch shrink-0 text-white">
      <div className="w-[48px] flex items-center justify-center">
        <svg width="17" height="17" viewBox="0 0 17 17"><path d="M0 2.500l7-1v6.500H0zM8 1.300L17 0v8H8zM0 9h7v6.500l-7-1zM8 9h9v8l-9-1.300z" fill="#fff" /></svg>
      </div>
      <div className="w-[344px] bg-[#f1f1f1] flex items-center pl-[11px] text-[#333]">
        <span className="w-[19px] h-[19px] rounded-full border-[3px] border-[#111] shrink-0" />
        <span className="ml-[9px] flex-1 text-[13.500px] font-['Noto_Sans_CJK_JP',sans-serif]">ここに入力して検索</span>
        <svg width="12" height="20" viewBox="0 0 12 20" className="mr-[15px]"><rect x="3" y="1" width="6" height="12" rx="3" fill="none" stroke="#333" /><path d="M1 9c0 3 2 5 5 5s5-2 5-5M6 14v4M3 18.500h6" fill="none" stroke="#333" /></svg>
      </div>
      <div className="w-[46px] flex items-center justify-center ml-[1px]">
        <svg width="16" height="18" viewBox="0 0 16 18" fill="none" stroke="#fff"><path d="M0 1h11M2 6h8v6H2zM0 17h11" /><rect x="13" y="0" width="2" height="2" fill="#fff" /><rect x="13" y="6" width="3" height="3" fill="#fff" stroke="none" /><path d="M14 12v5" /></svg>
      </div>
      <div className="w-[50px] flex items-center justify-center ml-[3px]">
        <svg width="22" height="19" viewBox="0 0 22 19"><path d="M0 0h8l1 2h13v17H0z" fill="#f8d775" /><path d="M0 2h22" stroke="#e2ba4d" /><path d="M5 19v-7h12v7h-3v-4H8v4z" fill="#3b9fe0" /></svg>
      </div>
      <div className="w-[50px] flex items-center justify-center">
        <svg width="23" height="24" viewBox="0 0 23 24"><path d="M7 6V4a4 4 0 0 1 9 0v2" fill="none" stroke="#fff" strokeWidth="1.500" /><rect y="6" width="23" height="18" rx="1" fill="#fff" /><rect x="6" y="8" width="5" height="5" fill="#f25022" /><rect x="12" y="8" width="5" height="5" fill="#7fba00" /><rect x="6" y="14" width="5" height="5" fill="#00a4ef" /><rect x="12" y="14" width="5" height="5" fill="#ffb900" /></svg>
      </div>
      <div className="w-[48px] flex items-center justify-center relative">
        <svg width="24" height="24" viewBox="0 0 24 24"><path d="M1 15c0-5 5-8 10-8 6 0 8 3 8 6 0 3-3 3-5 3-3 0-3 1-2 3 1 3-2 4-5 3-4-1-6-4-6-7z" fill="#d6e2ea" stroke="#8a8f96" /><circle cx="6" cy="13" r="1.600" fill="#e05050" /><circle cx="10" cy="11" r="1.600" fill="#40a040" /><circle cx="6" cy="18" r="1.600" fill="#3a7fd0" /><path d="M13 18L22 1" stroke="#c99a55" strokeWidth="2.400" /></svg>
        <Under c="left-[4px] right-[4px]" />
      </div>
      <div className="w-[49px] flex items-center justify-center relative">
        <svg width="23" height="23" viewBox="0 0 24 24"><path d="M12 12L2.500 5.500A11 11 0 0 1 22.500 8H12z" fill="#db4437" /><path d="M12 12l-4 6.900L2.500 5.500A11 11 0 0 0 11 23z" fill="#0f9d58" /><path d="M12 8h10.500A11 11 0 0 1 11 23l4.500-8z" fill="#f4b400" /><circle cx="12" cy="12" r="5" fill="#4285f4" stroke="#fff" strokeWidth="1.500" /></svg>
        <Under c="left-[4px] right-[5px]" />
      </div>
      <div className="w-[49px] flex items-center justify-center relative">
        <svg width="25" height="19" viewBox="0 0 25 19"><path d="M0 7l12-7 13 7v12H0z" fill="#fff" /><path d="M0 7l12 7 13-7" fill="none" stroke="#15152b" strokeWidth="1.300" /></svg>
        <span className="absolute right-[3px] bottom-[2px] w-[19px] h-[19px] rounded-full bg-[#3c3c3c] border border-[#999] text-[11px] leading-[17px] text-center font-bold font-['Liberation_Sans',sans-serif]">17</span>
      </div>
      <div className="w-[49px] bg-[#3c3c3c] flex items-center justify-center relative">
        <svg width="24" height="24" viewBox="0 0 24 24"><rect width="24" height="24" fill="#f6e4d2" /><path d="M6 4h13v3.500h-8V11h6v3.500h-6V21H6z" fill="#e08a2a" /></svg>
        <Under c="left-0 right-0" />
      </div>
      <div className="flex-1" />
      <div className="flex items-center relative w-[300px]">
        <svg width="20" height="20" viewBox="0 0 20 20" fill="none" stroke="#fff" strokeWidth="1.300" className="ml-[1px] mb-[3px]"><circle cx="6" cy="11" r="3" /><circle cx="13" cy="5" r="3" /><path d="M1 19c0-4 3-5 5-5s4 1 4 5M13 8c3 0 5 2 5 5" /></svg>
        <svg width="13" height="8" viewBox="0 0 13 8" fill="none" stroke="#ddd" strokeWidth="1.200" className="ml-[20px]"><path d="M1 7l5.500-6L12 7" /></svg>
        <svg width="16" height="10" viewBox="0 0 16 10" className="ml-[9px] mb-[1px]"><path d="M2 10a3 3 0 0 1 0-5 4 4 0 0 1 7-3 3.500 3.500 0 0 1 5 3 2.500 2.500 0 0 1 0 5z" fill="#fff" /></svg>
        <svg width="16" height="12" viewBox="0 0 16 12" fill="none" stroke="#fff" className="ml-[8px]"><rect x="4.500" y="2.500" width="11" height="8" /><rect x="6" y="4" width="8" height="5" fill="#fff" /><circle cx="2" cy="4" r="1.500" /><path d="M2 6v4" /></svg>
        <svg width="14" height="14" viewBox="0 0 14 14" fill="none" stroke="#ccc" className="ml-[10px]"><path d="M1 13C1 7 6 2 13 1M4 13c0-4 4-8 9-9M7 13c0-3 2-5 5-6" /><rect x="11" y="11" width="2" height="2" fill="#fff" stroke="none" /></svg>
        <svg width="16" height="14" viewBox="0 0 16 14" fill="none" stroke="#ddd" className="ml-[7px]"><path d="M1 5v4h2l4 3.500v-11L3 5z" /><path d="M10 5c1 1 1 3 0 4M12 3c2 2 2 6 0 8M14 1c3 3 3 9 0 12" stroke="#888" /></svg>
        <span className="ml-[7px] w-[15px] h-[15px] rounded-full bg-[#888] flex items-center justify-center"><svg width="8" height="8" viewBox="0 0 8 8"><path d="M1 1l6 6M7 1L1 7" stroke="#222" strokeWidth="1.800" /></svg></span>
        <div className="w-[72px] ml-[3px] flex flex-col items-center text-[12px] leading-[18px] text-[#e8e8e8] font-['Noto_Sans',sans-serif]">
          <span className="pl-[5px]">11:56</span><span>2019/03/12</span>
        </div>
        <svg width="16" height="14" viewBox="0 0 16 14" className="ml-[10px] mb-[7px]"><path d="M0 0h16v11H6l-3 3v-3H0z" fill="#fff" /></svg>
        <span className="absolute right-[16px] bottom-[2px] w-[20px] h-[18px] rounded-full bg-[#333] border border-[#888] text-[12px] leading-[16px] text-center font-bold font-['Liberation_Sans',sans-serif]">20</span>
      </div>
    </div>
  );
}

export default function App() {
  return (
    <div className={`w-[1366px] h-[768px] overflow-hidden bg-white flex flex-col relative ${JP}`}>
      <Defs />
      <div className="h-[23px] bg-white flex items-center shrink-0">
        <svg width="15" height="15" viewBox="0 0 17 17" className="ml-[3px]"><rect width="17" height="17" fill="#f6e4d2" /><path d="M5 3h9v3H8v3h4v3H8v3H5z" fill="#d9822b" /></svg>
        <span className="ml-[5px] text-[11.200px] text-[#8c8c8c]">Autodesk Fusion 360 (試用期間はあと 27 日で終了します)</span>
        <div className="flex-1" />
        <svg width="11" height="2" viewBox="0 0 11 2" className="mr-[32px]"><path d="M0 1h11" stroke="#888" /></svg>
        <svg width="11" height="11" viewBox="0 0 11 11" className="mr-[35px]" fill="none" stroke="#888"><rect x=".5" y="2.500" width="8" height="8" /><path d="M2.500 2.500v-2h8v8h-2" /></svg>
        <svg width="11" height="11" viewBox="0 0 11 11" className="mr-[19px]"><path d="M.5.5l10 10M10.500.5l-10 10" stroke="#888" /></svg>
      </div>
      <Tabs />
      <TopBar />
      <div className="relative h-[590px] shrink-0">
        <GridCanvas />
        <div className="relative h-full flex flex-col pt-[6px]">
          <Ribbon />
          <div className="flex-1 min-h-0 flex pb-[5px]">
            <div className="ml-[4px] pt-[4px] flex flex-col"><Browser /></div>
            <div className="flex items-end ml-[252px]"><NavBar /></div>
            <div className="flex-1" />
            <Palette />
          </div>
        </div>
        <TreeRows />
        <ViewCube />
        <Menu />
        <Tooltip />
      </div>
      <Timeline />
      <Taskbar />
    </div>
  );
}
